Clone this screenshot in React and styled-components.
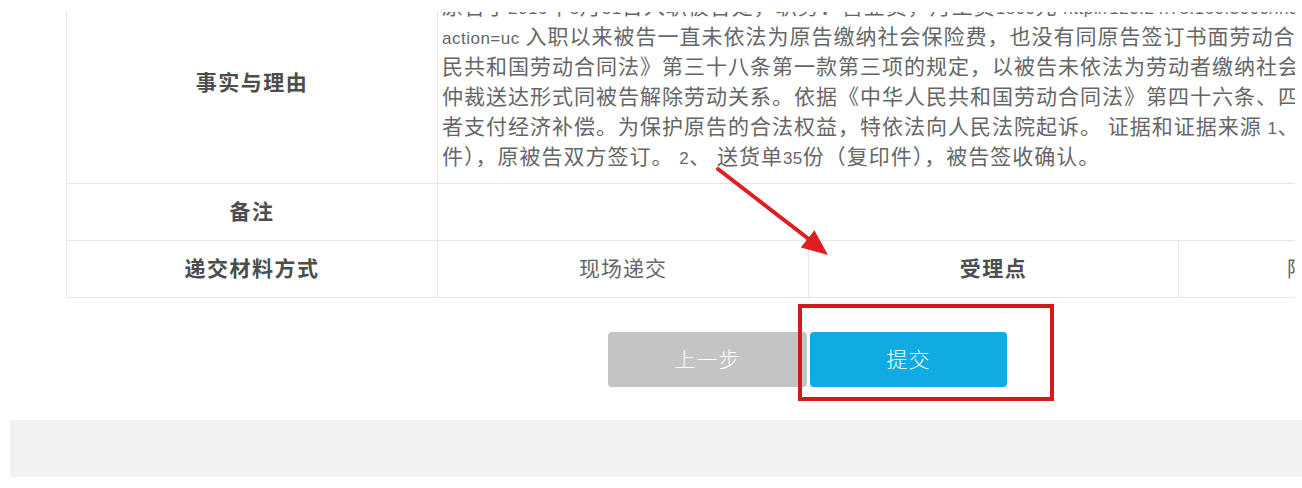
import React from "react";
import styled, { createGlobalStyle } from "styled-components";

const GlobalStyle = createGlobalStyle`
  html, body {
    margin: 0;
    padding: 0;
    background: #ffffff;
    overflow: hidden;
  }
  body {
    font-family: "Noto Sans CJK SC", "Noto Sans", sans-serif;
  }
`;

const Viewport = styled.div`
  position: relative;
  width: 1302px;
  height: 488px;
  overflow: hidden;
  background: #fff;
`;

const TopMask = styled.div`
  position: absolute;
  left: 0;
  top: 0;
  width: 100%;
  height: 12px;
  background: #fff;
  z-index: 5;
`;

const Page = styled.div`
  width: 1292px;
  margin-left: 10px;
  margin-top: -18px; /* page scrolled down */
  display: flex;
  flex-direction: column;
`;

const TableClip = styled.div`
  margin-left: 56px;
  width: 1229px;
  overflow: hidden;
`;

const Table = styled.table`
  width: 1483px;
  table-layout: fixed;
  border-collapse: collapse;
  font-family: "Noto Sans CJK SC", sans-serif;
`;

const Cell = styled.td`
  border: 1px solid #e6e6e6;
  padding: 0 4px ${(p) => (p.$left ? 0 : 4)}px;
  vertical-align: middle;
  font-size: 21px;
  letter-spacing: ${(p) => (p.$label ? 1.5 : 1)}px;
  color: ${(p) => (p.$label ? "#4d4d4d" : "#666")};
  font-weight: ${(p) => (p.$label ? 700 : 400)};
  text-align: ${(p) => (p.$left ? "left" : "center")};
  height: ${(p) => p.$h}px;
  white-space: nowrap;
  overflow: hidden;
  box-sizing: border-box;
`;

const Para = styled.div`
  padding: 7px 0 13px;
  line-height: 30px;
  white-space: nowrap;
`;

const Line = styled.div`
  height: 30px;
`;

const Latin = styled.span`
  font-family: "Liberation Sans", Arial, sans-serif;
  font-size: 17px;
  letter-spacing: 0.5px;
`;

const Actions = styled.div`
  position: relative;
  margin-left: 56px;
  margin-top: 34px;
  width: 1483px;
  display: flex;
  justify-content: center;
  gap: 3px;
`;

const Button = styled.button`
  width: ${(p) => p.$w}px;
  height: 55px;
  border: none;
  border-radius: 4px;
  background: ${(p) => (p.$primary ? "#0fabe2" : "#c4c4c4")};
  color: #fff;
  font-family: "Noto Sans CJK SC", sans-serif;
  font-size: 21px;
  font-weight: 300;
  letter-spacing: 1px;
  padding: 0 0 4px;
  cursor: pointer;
`;

const Highlight = styled.div`
  position: absolute;
  left: 732px;
  top: -28px;
  width: 256px;
  height: 97px;
  box-sizing: border-box;
  border: 4px solid #cf1b1d;
  pointer-events: none;
`;

const Footer = styled.div`
  margin-top: 33px;
  height: 57px;
  background: #f2f2f4;
`;

const ArrowSvg = styled.svg`
  position: absolute;
  left: 700px;
  top: 160px;
  z-index: 4;
  pointer-events: none;
`;

function Arrow() {
  return (
    <ArrowSvg width="140" height="105" viewBox="0 0 140 105">
      <line x1="18" y1="9" x2="110" y2="80" stroke="#dd1f1f" strokeWidth="4" strokeLinecap="round" />
      <polygon points="128,95 100.8,87.5 114.4,70.3" fill="#dd1f1f" />
    </ArrowSvg>
  );
}

export default function App() {
  return (
    <>
      <GlobalStyle />
      <Viewport>
        <TopMask />
        <Page>
          <TableClip>
            <Table>
              <colgroup>
                <col style={{ width: 371 }} />
                <col style={{ width: 371 }} />
                <col style={{ width: 370 }} />
                <col style={{ width: 371 }} />
              </colgroup>
              <tbody>
                <tr>
                  <Cell $label $h={200}>事实与理由</Cell>
                  <Cell colSpan={3} $left $h={200}>
                    <Para>
                      <Line>原告于<Latin>2016</Latin>年<Latin>5</Latin>月<Latin>31</Latin>日入职被告处，职务：营业员，月工资<Latin>1800</Latin>元 <Latin>http://120.24.75.160:3000/index.php?</Latin></Line>
                      <Line><Latin>action=uc</Latin> 入职以来被告一直未依法为原告缴纳社会保险费，也没有同原告签订书面劳动合同。依据《中华人</Line>
                      <Line>民共和国劳动合同法》第三十八条第一款第三项的规定，以被告未依法为劳动者缴纳社会保险费为由，以</Line>
                      <Line>仲裁送达形式同被告解除劳动关系。依据《中华人民共和国劳动合同法》第四十六条、四十七条规定，用人单位应</Line>
                      <Line>者支付经济补偿。为保护原告的合法权益，特依法向人民法院起诉。 证据和证据来源 <Latin>1</Latin>、 购销合同（复印</Line>
                      <Line>件），原被告双方签订。 <Latin>2</Latin>、 送货单<Latin>35</Latin>份（复印件），被告签收确认。</Line>
                    </Para>
                  </Cell>
                </tr>
                <tr>
                  <Cell $label $h={57}>备注</Cell>
                  <Cell colSpan={3} $left $h={57}></Cell>
                </tr>
                <tr>
                  <Cell $label $h={57}>递交材料方式</Cell>
                  <Cell $h={57}>现场递交</Cell>
                  <Cell $label $h={57}>受理点</Cell>
                  <Cell $h={57}>陆丰市人民法院</Cell>
                </tr>
              </tbody>
            </Table>
          </TableClip>
          <Actions>
            <Button $w={199}>上一步</Button>
            <Button $w={197} $primary>提交</Button>
            <Highlight />
          </Actions>
          <Footer />
        </Page>
        <Arrow />
      </Viewport>
    </>
  );
}
